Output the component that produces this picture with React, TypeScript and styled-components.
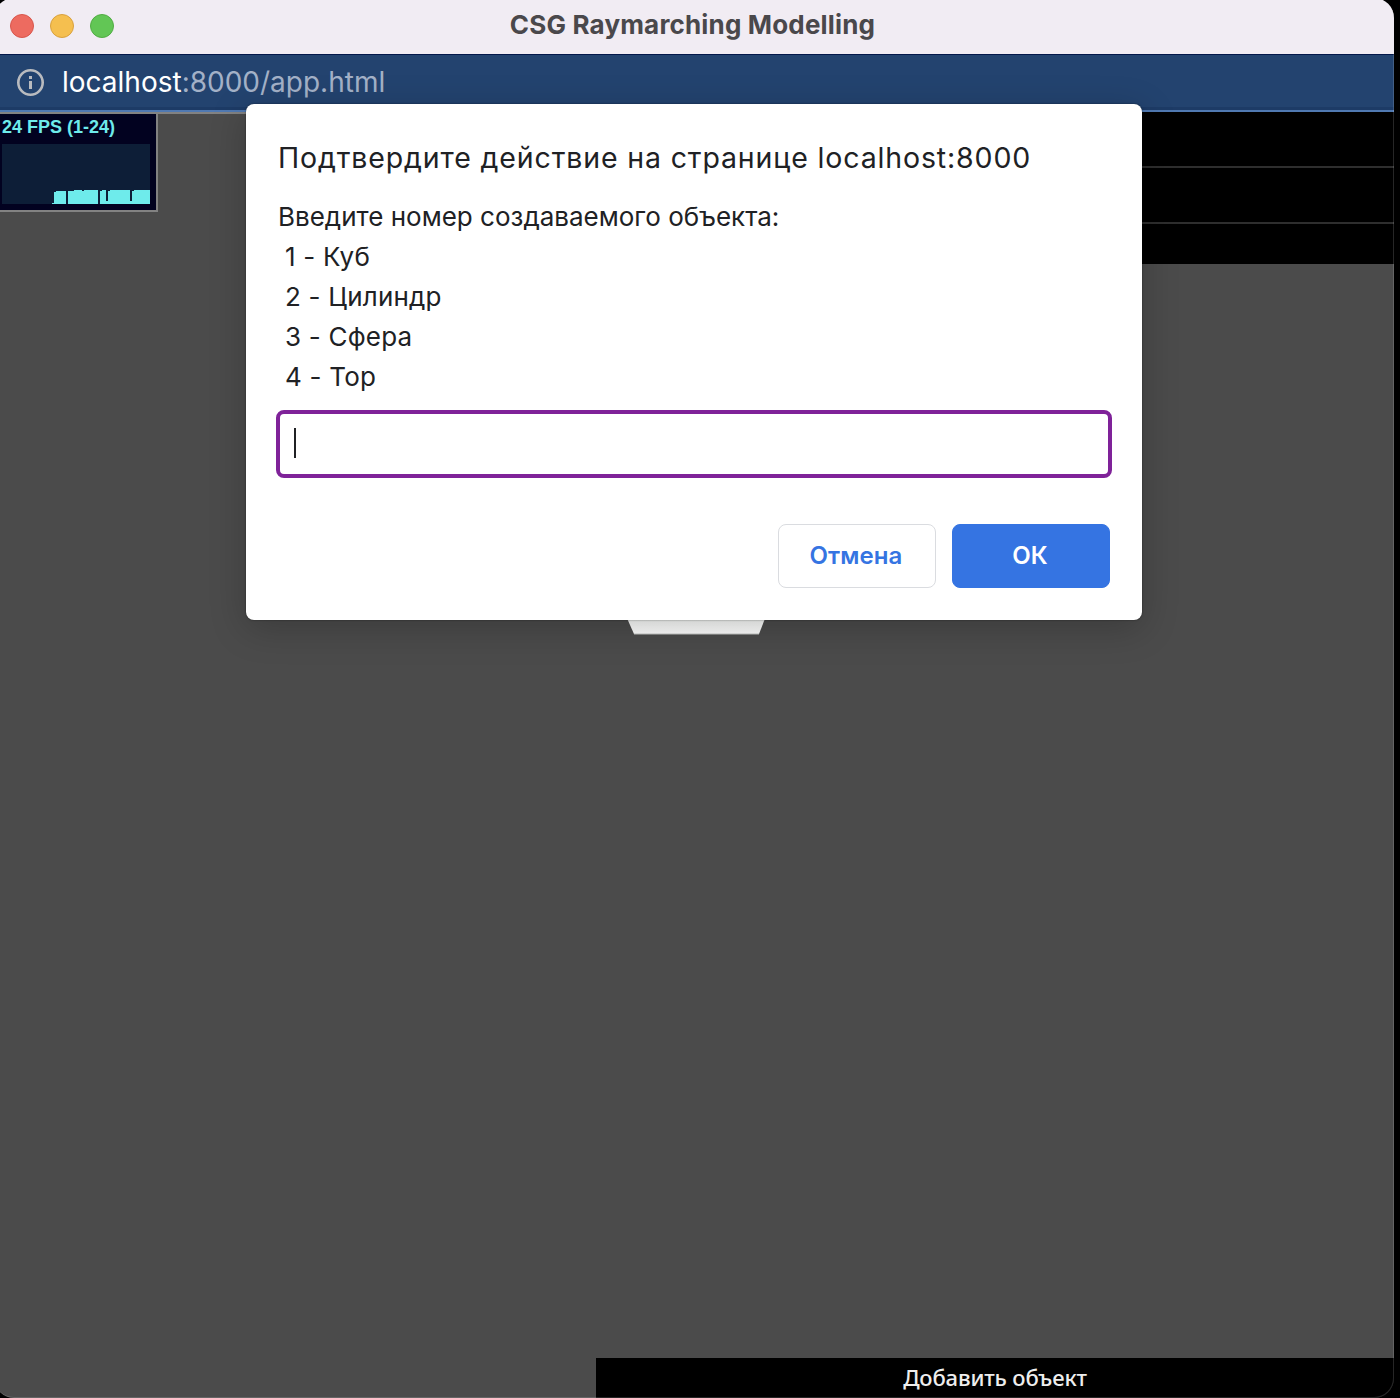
import React from "react";
import styled, { createGlobalStyle, css } from "styled-components";

const GlobalStyle = createGlobalStyle`
  * { box-sizing: border-box; }
  html, body { margin: 0; background: #000; overflow: hidden; }
  body { font-family: Inter, "Liberation Sans", sans-serif; }
`;

const Desktop = styled.div`
  width: 1400px;
  height: 1398px;
  background: #000;
  overflow: hidden;
`;

const Window = styled.div`
  position: relative;
  display: flex;
  flex-direction: column;
  width: 1400px;
  height: 1400px;
  margin: -2px 0 0 -6px;
  padding-left: 6px;
  border-radius: 20px;
  overflow: hidden;
  background: #4b4b4b;

  &::after {
    content: "";
    position: absolute;
    inset: 56px 0 0 0;
    border: solid rgba(255, 255, 255, 0.15);
    border-width: 0 1px 1px 0;
    border-radius: 0 0 20px 20px;
    pointer-events: none;
  }
`;

const TitleBar = styled.header`
  display: flex;
  align-items: center;
  flex: none;
  height: 57px;
  margin-left: -6px;
  padding: 2px 0 2px 16px;
  border-bottom: 1px solid #04184a;
  background: #f1ecf3;
`;

const Lights = styled.div`
  display: flex;
  gap: 16px;
  width: 104px;
`;

const Light = styled.span<{ $fill: string; $edge: string }>`
  width: 24px;
  height: 24px;
  border-radius: 50%;
  border: 1px solid ${(p) => p.$edge};
  background: ${(p) => p.$fill};
`;

const WindowTitle = styled.h1`
  flex: 1;
  margin: 0;
  padding: 0 123px 2px 0;
  text-align: center;
  font-size: 26px;
  font-weight: 700;
  line-height: 32px;
  letter-spacing: 0.17px;
  color: #4a484b;
`;

const AddressBar = styled.div`
  display: flex;
  align-items: center;
  flex: none;
  gap: 18px;
  height: 57px;
  margin-left: -6px;
  padding: 0 0 0 22px;
  border-bottom: 2px solid #5079b2;
  background: linear-gradient(#23436f 0 52px, #1d3b66 52px);

  svg {
    margin-top: -1px;
  }
`;

const Url = styled.div`
  padding-bottom: 2px;
  font-size: 28px;
  line-height: 34px;
  letter-spacing: 0;
  color: #a3b1c7;
`;

const Host = styled.span`
  color: #fff;
`;

const Page = styled.main`
  display: flex;
  flex: 1;
  justify-content: space-between;
  border-top: 2px solid #828282;
`;

const Stats = styled.section`
  width: 158px;
  height: 98px;
  padding: 0 6px 6px 2px;
  border: solid #828282;
  border-width: 0 2px 2px 0;
  background: #020220;
`;

const StatsLabel = styled.div`
  height: 30px;
  font: bold 18px/27px "Liberation Sans", Arial, sans-serif;
  white-space: nowrap;
  color: #6eebeb;
`;

const Graph = styled.svg`
  display: block;
  width: 148px;
  height: 60px;
  background: #0d1e37;
`;

const Controls = styled.aside`
  display: flex;
  flex-direction: column;
  justify-content: space-between;
  width: 798px;
  margin-top: -2px;
`;

const Rows = styled.div`
  background: #000;
`;

const Row = styled.div<{ $last?: boolean }>`
  height: ${(p) => (p.$last ? 40 : 56)}px;
  ${(p) => !p.$last && css`border-bottom: 2px solid #2e2e2e;`}
`;

const AddButton = styled.button`
  height: 40px;
  padding: 0 0 2px;
  border: 0;
  background: #000;
  color: #eee;
  font: 500 22px/38px "Noto Sans", sans-serif;
  letter-spacing: -0.15px;
`;

const Dialog = styled.div`
  position: absolute;
  left: 252px;
  top: 106px;
  width: 896px;
  height: 516px;
  padding: 32px 32px;
  border-radius: 8px;
  background: #fff;
  color: #202124;
  box-shadow: 0 0 2px rgba(0, 0, 0, 0.5), 0 8px 36px rgba(0, 0, 0, 0.22);
`;

const DialogTitle = styled.h2`
  margin: 0;
  font-size: 28.5px;
  font-weight: 400;
  line-height: 44px;
  letter-spacing: 0.86px;
  white-space: nowrap;
`;

const Message = styled.div`
  margin-top: 17px;
  font-size: 26px;
  line-height: 40px;
  white-space: nowrap;
`;

const Line = styled.div<{ $spacing: number; $item?: boolean }>`
  letter-spacing: ${(p) => p.$spacing}px;
  padding-left: ${(p) => (p.$item ? 7 : 0)}px;
`;

const Field = styled.div`
  display: flex;
  height: 68px;
  margin: 13px -2px 0;
  padding: 14px;
  border: 4px solid #7f2299;
  border-radius: 8px;
`;

const Caret = styled.span`
  width: 2px;
  height: 30px;
  background: #202124;
`;

const Actions = styled.div`
  display: flex;
  justify-content: flex-end;
  gap: 16px;
  margin-top: 46px;
`;

const Button = styled.button<{ $primary?: boolean }>`
  width: 158px;
  height: 64px;
  padding: 0 2px 0 0;
  border: 1px solid ${(p) => (p.$primary ? "#3574e2" : "#dadce0")};
  border-radius: 8px;
  background: ${(p) => (p.$primary ? "#3574e2" : "#fff")};
  color: ${(p) => (p.$primary ? "#fff" : "#3574e2")};
  font: 600 24px/62px Inter, sans-serif;
  letter-spacing: 0.1px;
`;

const SceneObject = styled.svg`
  position: absolute;
  left: 633px;
  top: 618px;
`;

const samples: [number, number, number][] = [
  [50, 2, 1], [52, 2, 12], [54, 10, 13], [66, 6, 13], [72, 8, 14], [80, 2, 13],
  [82, 14, 14], [98, 2, 13], [100, 4, 14], [104, 2, 3], [106, 2, 13],
  [108, 20, 14], [128, 2, 3], [130, 2, 13], [132, 16, 14],
];

const items = ["1 - Куб", "2 - Цилиндр", "3 - Сфера", "4 - Тор"];

export default function App() {
  return (
    <Desktop>
      <GlobalStyle />
      <Window>
        <TitleBar>
          <Lights>
            <Light $fill="#ed6b60" $edge="#d8564c" />
            <Light $fill="#f5bf4f" $edge="#d9a13e" />
            <Light $fill="#62c655" $edge="#51ac43" />
          </Lights>
          <WindowTitle>CSG Raymarching Modelling</WindowTitle>
        </TitleBar>
        <AddressBar>
          <svg width="28" height="28" viewBox="0 0 28 28">
            <circle cx="14.5" cy="14.5" r="12.2" fill="none" stroke="#b9bbbf" strokeWidth="2.6" />
            <path d="M13 8h3v3h-3zM13 13h3v8h-3z" fill="#b9bbbf" />
          </svg>
          <Url><Host>localhost</Host>:8000/app.html</Url>
        </AddressBar>
        <Page>
          <Stats>
            <StatsLabel>24 FPS (1-24)</StatsLabel>
            <Graph viewBox="0 0 148 60" shapeRendering="crispEdges">
              {samples.map(([x, w, h]) => (
                <rect key={x} x={x} y={60 - h} width={w} height={h} fill="#6eebeb" />
              ))}
            </Graph>
          </Stats>
          <Controls>
            <Rows>
              <Row />
              <Row />
              <Row $last />
            </Rows>
            <AddButton>Добавить объект</AddButton>
          </Controls>
        </Page>
        <SceneObject width="138" height="19" viewBox="0 0 138 19">
          <defs>
            <linearGradient id="face" x1="0" y1="0" x2="0" y2="1">
              <stop offset="0" stopColor="#f8faf8" />
              <stop offset="1" stopColor="#ffffff" />
            </linearGradient>
          </defs>
          <path d="M-1 0H139L132 18H7Z" fill="url(#face)" />
          <path d="M7 18.2H132" stroke="#a2a4a2" />
        </SceneObject>
        <Dialog role="dialog">
          <DialogTitle>Подтвердите действие на странице localhost:8000</DialogTitle>
          <Message>
            <Line $spacing={0}>Введите номер создаваемого объекта:</Line>
            {items.map((item) => (
              <Line key={item} $spacing={0.2} $item>{item}</Line>
            ))}
          </Message>
          <Field><Caret /></Field>
          <Actions>
            <Button>Отмена</Button>
            <Button $primary>ОК</Button>
          </Actions>
        </Dialog>
      </Window>
    </Desktop>
  );
}
